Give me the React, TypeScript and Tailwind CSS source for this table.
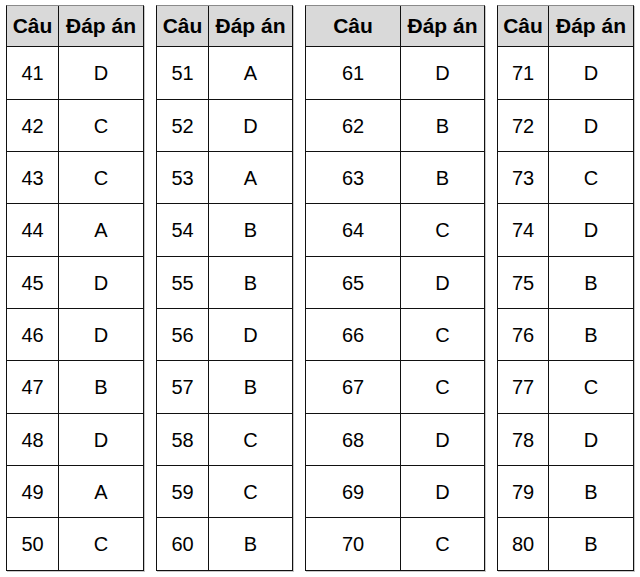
import React from "react";

type Col = { first: number; rows: [number, string][] };

const data: Col[] = [
  {
    first: 52,
    rows: [
      [41, "D"], [42, "C"], [43, "C"], [44, "A"], [45, "D"],
      [46, "D"], [47, "B"], [48, "D"], [49, "A"], [50, "C"],
    ],
  },
  {
    first: 52,
    rows: [
      [51, "A"], [52, "D"], [53, "A"], [54, "B"], [55, "B"],
      [56, "D"], [57, "B"], [58, "C"], [59, "C"], [60, "B"],
    ],
  },
  {
    first: 95,
    rows: [
      [61, "D"], [62, "B"], [63, "B"], [64, "C"], [65, "D"],
      [66, "C"], [67, "C"], [68, "D"], [69, "D"], [70, "C"],
    ],
  },
  {
    first: 51,
    rows: [
      [71, "D"], [72, "D"], [73, "C"], [74, "D"], [75, "B"],
      [76, "B"], [77, "C"], [78, "D"], [79, "B"], [80, "B"],
    ],
  },
];

const heights = [
  "h-[53px]", "h-[52px]", "h-[52px]", "h-[53px]", "h-[52px]",
  "h-[52px]", "h-[53px]", "h-[52px]", "h-[52px]", "h-[52px]",
];

const widths = ["w-[138px]", "w-[137px]", "w-[180px]", "w-[137px]"];
const gridCols = [
  "grid-cols-[52px_1fr]",
  "grid-cols-[52px_1fr]",
  "grid-cols-[95px_1fr]",
  "grid-cols-[51px_1fr]",
];

function AnswerTable({ col, idx }: { col: Col; idx: number }) {
  return (
    <div
      className={`${widths[idx]} flex flex-col border border-[#111] border-t-[#8a8a8a] shadow-[1px_1px_0_#c8c8c8]`}
    >
      <div className={`grid ${gridCols[idx]} h-[41px] bg-[#d9d9d9] border-b border-[#111] text-[21px] font-bold`}>
        <div className="flex items-center justify-center border-r border-[#111]">
          Câu
        </div>
        <div className="flex items-center justify-center">Đáp án</div>
      </div>
      {col.rows.map(([n, a], i) => (
        <div
          key={n}
          className={`grid ${gridCols[idx]} ${heights[i]} ${
            i < 9 ? "border-b border-[#111]" : ""
          }`}
        >
          <div className="flex items-center justify-center border-r border-[#111]">
            {n}
          </div>
          <div className="flex items-center justify-center">{a}</div>
        </div>
      ))}
    </div>
  );
}

export default function App() {
  return (
    <div
      className="w-[640px] h-[577px] bg-white text-[20px] text-black pl-[6px] pt-[5px] flex gap-[12px] items-start"
      style={{ fontFamily: '"Liberation Sans", Arial, sans-serif' }}
    >
      {data.map((c, i) => (
        <AnswerTable key={i} col={c} idx={i} />
      ))}
    </div>
  );
}
